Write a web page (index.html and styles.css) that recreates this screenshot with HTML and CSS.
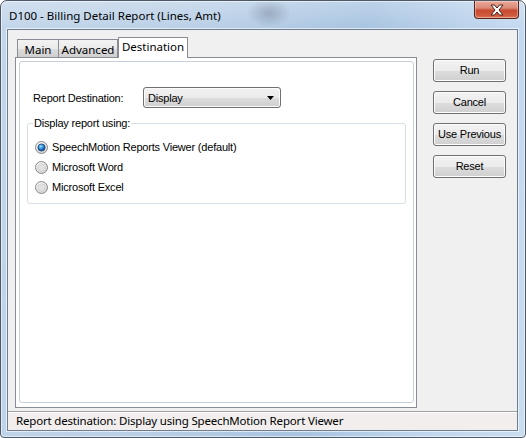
FILE: index.html
```html
<!DOCTYPE html>
<html>
<head>
<meta charset="utf-8">
<link rel="stylesheet" href="styles.css">
</head>
<body>
<div class="window">
  <div class="titlebar">
    <span class="title">D100 - Billing Detail Report (Lines, Amt)</span>
    <div class="close">
      <svg width="16" height="12" viewBox="0 0 16 12">
        <path d="M2 1 L5.5 1 L8 4 L10.5 1 L14 1 L10 6 L14 11 L10.5 11 L8 8 L5.5 11 L2 11 L6 6 Z" fill="#ffffff" stroke="#4a1f17" stroke-width="1" stroke-linejoin="round"/>
      </svg>
    </div>
  </div>
  <div class="client">
    <div class="body">
      <div class="tabctl">
        <div class="tabstrip">
          <div class="tab tab-main">Main</div>
          <div class="tab tab-adv">Advanced</div>
          <div class="tab tab-sel">Destination</div>
        </div>
        <div class="page">
          <div class="frame">
            <div class="dest-row">
              <span class="label">Report Destination:</span>
              <div class="combo">
                <span class="combo-text">Display</span>
                <svg class="combo-arrow" width="7" height="4" viewBox="0 0 7 4"><polygon points="0,0 7,0 3.5,4" fill="#000"/></svg>
              </div>
            </div>
            <fieldset class="group">
              <legend class="legend">Display report using:</legend>
              <div class="radio-row">
                <svg class="radio" width="13" height="13" viewBox="0 0 13 13">
                  <defs>
                    <radialGradient id="rg1" cx="0.35" cy="0.3" r="0.8"><stop offset="0" stop-color="#ffffff"/><stop offset="1" stop-color="#cfcfcf"/></radialGradient>
                    <radialGradient id="dot" cx="0.4" cy="0.35" r="0.7"><stop offset="0" stop-color="#a6e3fb"/><stop offset="0.45" stop-color="#2f8fd6"/><stop offset="1" stop-color="#0d3f8a"/></radialGradient>
                  </defs>
                  <circle cx="6.5" cy="6.5" r="6" fill="url(#rg1)" stroke="#8a8a8a" stroke-width="1"/>
                  <circle cx="6.5" cy="6.5" r="3.6" fill="url(#dot)" stroke="#1a3f70" stroke-width="0.8"/>
                </svg>
                <span>SpeechMotion Reports Viewer (default)</span>
              </div>
              <div class="radio-row">
                <svg class="radio" width="13" height="13" viewBox="0 0 13 13">
                  <defs>
                    <radialGradient id="rg2" cx="0.35" cy="0.3" r="0.8"><stop offset="0" stop-color="#ffffff"/><stop offset="1" stop-color="#cfcfcf"/></radialGradient>
                  </defs>
                  <circle cx="6.5" cy="6.5" r="6" fill="url(#rg2)" stroke="#8a8a8a" stroke-width="1"/>
                  <circle cx="6.5" cy="6.5" r="3.8" fill="#e2e2e2" stroke="#c4c4c4" stroke-width="0.6"/>
                </svg>
                <span>Microsoft Word</span>
              </div>
              <div class="radio-row">
                <svg class="radio" width="13" height="13" viewBox="0 0 13 13">
                  <defs>
                    <radialGradient id="rg3" cx="0.35" cy="0.3" r="0.8"><stop offset="0" stop-color="#ffffff"/><stop offset="1" stop-color="#cfcfcf"/></radialGradient>
                  </defs>
                  <circle cx="6.5" cy="6.5" r="6" fill="url(#rg3)" stroke="#8a8a8a" stroke-width="1"/>
                  <circle cx="6.5" cy="6.5" r="3.8" fill="#e2e2e2" stroke="#c4c4c4" stroke-width="0.6"/>
                </svg>
                <span>Microsoft Excel</span>
              </div>
            </fieldset>
          </div>
        </div>
      </div>
      <div class="buttons">
        <div class="btn">Run</div>
        <div class="btn">Cancel</div>
        <div class="btn">Use Previous</div>
        <div class="btn">Reset</div>
      </div>
    </div>
    <div class="status">Report destination: Display using SpeechMotion Report Viewer</div>
  </div>
</div>
</body>
</html>
```
FILE: styles.css
```css
html, body {
  margin: 0;
  padding: 0;
  background: #ffffff;
}
.window {
  width: 526px;
  height: 438px;
  box-sizing: border-box;
  border: 1px solid #4d5966;
  border-radius: 7px 7px 4px 4px;
  padding: 0 7px 6px 6px;
  display: flex;
  flex-direction: column;
  background:
    radial-gradient(ellipse 22px 14px at 268px 12px, rgba(90,100,115,0.35), rgba(90,100,115,0) 100%),
    linear-gradient(180deg, rgba(255,255,255,0.25) 0px, rgba(255,255,255,0) 28px),
    linear-gradient(100deg, #c3d6ea 0%, #b9cfe6 35%, #a8c4e1 62%, #c2d8ef 85%, #c9dcf0 100%);
  box-shadow: inset 0 0 0 1px rgba(255,255,255,0.55);
  font-family: "Liberation Sans", Arial, sans-serif;
}
.titlebar {
  height: 28px;
  display: flex;
  align-items: center;
  padding-left: 2px;
}
.title {
  flex: 1;
  font-family: "Noto Sans", "Open Sans", sans-serif;
  font-size: 11.5px;
  color: #000;
  padding-top: 1px;
}
.close {
  align-self: flex-start;
  width: 45px;
  height: 18px;
  margin-right: -1px;
  box-sizing: border-box;
  border: 1px solid #5a2419;
  border-top: none;
  border-radius: 0 0 4px 4px;
  background: linear-gradient(180deg, #eaa899 0%, #dc8b78 40%, #c84a30 55%, #cf5a3e 85%, #e07a5c 100%);
  box-shadow: inset 0 0 0 1px rgba(255,255,255,0.35);
  display: flex;
  align-items: center;
  justify-content: center;
}
.client {
  flex: 1;
  border: 1px solid #6e7e90;
  background: #f0f0f0;
  display: flex;
  flex-direction: column;
  box-shadow: 0 0 0 1px rgba(255,255,255,0.6);
}
.body {
  flex: 1;
  display: flex;
  padding: 7px 0 0 7px;
}
.tabctl {
  width: 402px;
  height: 371px;
  display: flex;
  flex-direction: column;
}
.tabstrip {
  height: 20px;
  display: flex;
  align-items: flex-end;
  padding-left: 2px;
}
.tab {
  box-sizing: border-box;
  height: 18px;
  border: 1px solid #898c95;
  border-bottom: none;
  background: linear-gradient(180deg, #f2f2f2 0%, #ebebeb 50%, #dddddd 51%, #cfcfcf 100%);
  font-family: "Noto Sans", "Open Sans", sans-serif;
  font-size: 11.5px;
  line-height: 18px;
  text-align: center;
  color: #000;
}
.tab-main {
  width: 42px;
  padding-top: 1px;
}
.tab-adv {
  width: 60px;
  margin-left: -1px;
  padding-top: 1px;
}
.tab-sel {
  width: 70px;
  height: 21px;
  margin-left: 0;
  margin-bottom: -1px;
  background: #ffffff;
  position: relative;
  z-index: 1;
  line-height: 17px;
}
.page {
  flex: 1;
  border: 1px solid #898c95;
  background: #ffffff;
  padding: 3px 2px 4px 3px;
  display: flex;
}
.frame {
  flex: 1;
  border: 1px solid #c4d0dc;
  border-radius: 3px;
  font-size: 11px;
  letter-spacing: -0.2px;
  color: #000;
}
.dest-row {
  display: flex;
  align-items: center;
  margin-top: 25px;
  padding-left: 13px;
}
.label {
  width: 110px;
}
.combo {
  width: 138px;
  height: 21px;
  box-sizing: border-box;
  border: 1px solid #707070;
  border-radius: 3px;
  background: linear-gradient(180deg, #f2f2f2 0%, #ebebeb 50%, #dddddd 51%, #cfcfcf 100%);
  box-shadow: inset 0 0 0 1px #fbfbfb;
  display: flex;
  align-items: center;
  padding: 0 6px 0 4px;
}
.combo-text {
  flex: 1;
}
.group {
  margin: 9px 7px 0 7px;
  border: 1px solid #d5dfe5;
  border-radius: 3px;
  padding: 7px 0 6px 7px;
  min-width: 0;
}
.legend {
  padding: 0 1px;
  margin-left: -2px;
  line-height: 13px;
}
.radio-row {
  height: 20px;
  display: flex;
  align-items: center;
  gap: 4px;
}
.radio {
  flex: none;
}
.buttons {
  margin-left: 16px;
  margin-top: 22px;
  display: flex;
  flex-direction: column;
  gap: 9px;
}
.btn {
  width: 73px;
  height: 23px;
  box-sizing: border-box;
  border: 1px solid #707070;
  border-radius: 3px;
  background: linear-gradient(180deg, #f2f2f2 0%, #ebebeb 50%, #dddddd 51%, #cfcfcf 100%);
  box-shadow: inset 0 0 0 1px #fcfcfc;
  font-size: 11px;
  letter-spacing: -0.2px;
  line-height: 21px;
  text-align: center;
  color: #000;
}
.status {
  height: 19px;
  box-sizing: border-box;
  border-top: 1px solid #a0a0a0;
  box-shadow: inset 0 1px 0 #ffffff;
  background: #f1eeed;
  padding-left: 8px;
  font-family: "Noto Sans", "Open Sans", sans-serif;
  font-size: 11.5px;
  letter-spacing: -0.18px;
  line-height: 18px;
  color: #000;
}
```
